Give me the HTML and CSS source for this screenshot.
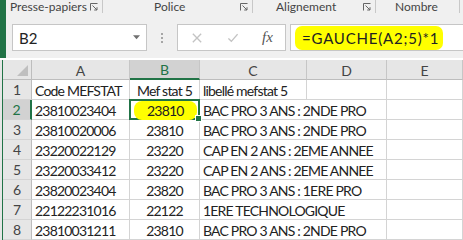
FILE: index.html
```html
<!DOCTYPE html>
<html lang="fr">
<head>
  <meta charset="UTF-8">
  <title>Classeur</title>
  <link rel="stylesheet" href="styles.css">
</head>
<body>
  <div class="top">
    <div class="ribbon">
      <div class="group g-clip"><span>Presse-papiers</span><svg class="launch" viewBox="0 0 8 8"><path d="M0.5 7.5V0.5H7.5M2.5 2.5L7 7M7 4.2V7H4.2" /></svg></div>
      <div class="group g-font"><span>Police</span><svg class="launch" viewBox="0 0 8 8"><path d="M0.5 7.5V0.5H7.5M2.5 2.5L7 7M7 4.2V7H4.2" /></svg></div>
      <div class="group g-align"><span>Alignement</span><svg class="launch" viewBox="0 0 8 8"><path d="M0.5 7.5V0.5H7.5M2.5 2.5L7 7M7 4.2V7H4.2" /></svg></div>
      <div class="group g-num"><span>Nombre</span></div>
    </div>
    <div class="fbar">
      <div class="namebox">
        <span>B2</span>
        <svg class="drop" viewBox="0 0 8 5"><path d="M0 0H8L4 4.5Z" /></svg>
      </div>
      <div class="dots"><i></i><i></i><i></i></div>
      <div class="fbuttons">
        <svg class="ico" viewBox="0 0 12 12"><path d="M1 1L11 11M11 1L1 11" /></svg>
        <svg class="ico" viewBox="0 0 12 12"><path d="M0.5 6.5L4 10L11.5 1.5" /></svg>
        <span class="fx">fx</span>
      </div>
      <div class="finput"><span class="mark">=GAUCHE(A2;5)*1</span></div>
    </div>
  </div>

  <div class="sheet">
    <div class="grid">
      <div class="hd corner"><svg viewBox="0 0 11 11"><path d="M11 0V11H0Z" /></svg></div>
      <div class="hd col">A</div>
      <div class="hd col sel">B</div>
      <div class="hd col">C</div>
      <div class="hd col">D</div>
      <div class="hd col">E</div>

      <div class="hd row">1</div>
      <div class="c">Code MEFSTAT</div>
      <div class="c mid">Mef stat 5</div>
      <div class="c">libellé mefstat 5</div>
      <div class="c"></div>
      <div class="c"></div>

      <div class="hd row sel">2</div>
      <div class="c">23810023404</div>
      <div class="c mid active"><span class="mark">23810</span><i class="handle"></i></div>
      <div class="c span">BAC PRO 3 ANS : 2NDE PRO</div>
      <div class="c"></div>
      <div class="c"></div>

      <div class="hd row">3</div>
      <div class="c">23810020006</div>
      <div class="c mid">23810</div>
      <div class="c span">BAC PRO 3 ANS : 2NDE PRO</div>
      <div class="c"></div>
      <div class="c"></div>

      <div class="hd row">4</div>
      <div class="c">23220022129</div>
      <div class="c mid">23220</div>
      <div class="c span">CAP EN 2 ANS : 2EME ANNEE</div>
      <div class="c"></div>
      <div class="c"></div>

      <div class="hd row">5</div>
      <div class="c">23220033412</div>
      <div class="c mid">23220</div>
      <div class="c span">CAP EN 2 ANS : 2EME ANNEE</div>
      <div class="c"></div>
      <div class="c"></div>

      <div class="hd row">6</div>
      <div class="c">23820023404</div>
      <div class="c mid">23820</div>
      <div class="c span">BAC PRO 3 ANS : 1ERE PRO</div>
      <div class="c"></div>
      <div class="c"></div>

      <div class="hd row">7</div>
      <div class="c">22122231016</div>
      <div class="c mid">22122</div>
      <div class="c span">1ERE TECHNOLOGIQUE</div>
      <div class="c"></div>
      <div class="c"></div>

      <div class="hd row">8</div>
      <div class="c">23810031211</div>
      <div class="c mid">23810</div>
      <div class="c span">BAC PRO 3 ANS : 2NDE PRO</div>
      <div class="c"></div>
      <div class="c"></div>
    </div>
  </div>
</body>
</html>
```

FILE: styles.css
```css
body {
  margin: 0;
  width: 463px;
  height: 240px;
  overflow: hidden;
  background: #fff;
  font-family: 'Lato', 'Liberation Sans', sans-serif;
  color: #222;
}

.top {
  border-left: 6px solid #217346;
  background: #f0f0f0;
}

/* ribbon group labels */
.ribbon {
  height: 13px;
  display: flex;
  font-size: 12px;
  color: #444;
}

.group {
  display: flex;
  align-items: flex-end;
  box-sizing: border-box;
  border-right: 1px solid #c8c8c8;
  height: 13px;
  line-height: 13px;
  white-space: nowrap;
}

.group span {
  flex: 1;
}

.g-clip { width: 97px; padding-left: 4px; }
.g-font { width: 150px; }
.g-font span { padding-left: 51px; }
.g-align { width: 123px; }
.g-align span { padding-left: 23px; }
.g-num { width: 84px; }
.g-num span { padding-left: 19px; }

.launch {
  width: 8px;
  height: 8px;
  margin: 0 4px 2px 0;
  fill: none;
  stroke: #666;
  stroke-width: 1;
}

.fbar {
  height: 45px;
  display: flex;
  align-items: flex-start;
  padding: 11px 0 0 6px;
  box-sizing: border-box;
}

.namebox {
  width: 121px;
  height: 25px;
  background: #fff;
  border: 1px solid #c6c6c6;
  display: flex;
  align-items: center;
  justify-content: space-between;
  padding: 0 6px;
  font-size: 15px;
}

.drop {
  width: 7px;
  height: 5px;
  fill: #707070;
}

.dots {
  width: 30px;
  height: 27px;
  display: flex;
  flex-direction: column;
  align-items: center;
  justify-content: center;
  gap: 2px;
}

.dots i {
  width: 2px;
  height: 2px;
  background: #a6a6a6;
}

.fbuttons {
  width: 93px;
  height: 25px;
  background: #fff;
  border: 1px solid #c6c6c6;
  display: flex;
  align-items: center;
  padding-left: 14px;
}

.ico {
  width: 10px;
  height: 10px;
  fill: none;
  stroke: #c3c3c3;
  stroke-width: 1.6;
  margin-right: 26px;
}

.ico + .ico {
  margin-right: 24px;
}

.fx {
  font-family: 'Liberation Serif', serif;
  font-style: italic;
  font-size: 15px;
  color: #555;
}

.finput {
  flex: 1;
  height: 25px;
  margin-left: 4px;
  background: #fff;
  border: 1px solid #c6c6c6;
  border-right: none;
  display: flex;
  align-items: center;
  padding-left: 4px;
  font-size: 15px;
  letter-spacing: 0.8px;
}

.finput .mark {
  padding: 3px 4px 3px 7px;
}

.mark {
  background: #ffff00;
  border-radius: 7px;
}

/* worksheet */
.sheet {
  margin-top: 2px;
  padding-left: 2px;
  background: #e6e6e6;
}

.grid {
  display: grid;
  grid-template-columns: 29px 98px 70px 107px 80px 1fr;
  grid-auto-rows: 20px;
  border-left: 1px solid #217346;
  background: #fff;
  font-size: 14px;
  letter-spacing: -0.8px;
}

.hd {
  background: #e6e6e6;
  color: #444;
  display: flex;
  align-items: center;
  justify-content: center;
  box-sizing: border-box;
  font-size: 14px;
  letter-spacing: 0;
}

.hd.col {
  border-right: 1px solid #c6c6c6;
  border-bottom: 1px solid #bdbdbd;
  padding-top: 1px;
}

.hd.row {
  border-right: 1px solid #bdbdbd;
  border-bottom: 1px solid #d4d4d4;
}

.hd.sel {
  background: #d2d2d2;
  color: #217346;
}

.hd.col.sel {
  border-bottom: 2px solid #217346;
}

.hd.row.sel {
  border-right: 2px solid #217346;
}

.corner {
  border-right: 1px solid #bdbdbd;
  border-bottom: 1px solid #bdbdbd;
  justify-content: flex-end;
  align-items: flex-end;
  padding: 0 3px 3px 0;
}

.corner svg {
  width: 11px;
  height: 11px;
  fill: #bfbfbf;
}

.c {
  border-right: 1px solid #d4d4d4;
  border-bottom: 1px solid #d4d4d4;
  box-sizing: border-box;
  padding: 2px 3px 0;
  line-height: 18px;
  white-space: nowrap;
  position: relative;
}

.c.mid {
  text-align: center;
}

.c.span {
  border-right: none;
  z-index: 1;
}

.c.active {
  border: 2px solid #217346;
  margin: -1px 0 0 -1px;
  padding-top: 1px;
  z-index: 2;
}

.c.active .mark {
  padding: 1px 13px;
  border-radius: 8px;
}

.handle {
  position: absolute;
  right: -4px;
  bottom: -4px;
  width: 5px;
  height: 5px;
  background: #217346;
  border: 1px solid #fff;
}
```
